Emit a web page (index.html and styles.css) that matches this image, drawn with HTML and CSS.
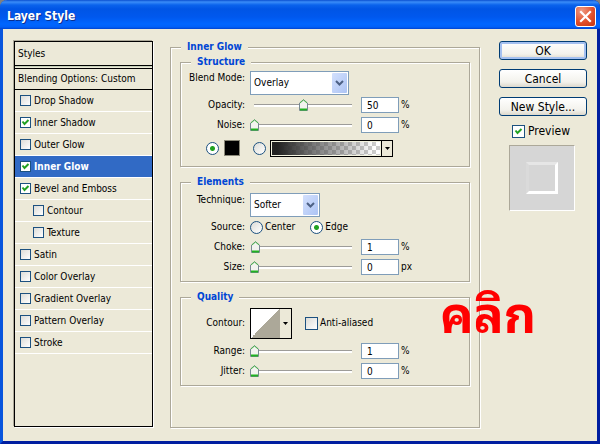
FILE: index.html
```html
<!DOCTYPE html>
<html lang="en">
<head>
<meta charset="utf-8">
<title>Layer Style</title>
<link rel="stylesheet" href="styles.css">
</head>
<body>
<div class="window">
  <header class="titlebar">
    <h1>Layer Style</h1>
    <button class="close" type="button" aria-label="Close">
      <svg viewBox="0 0 21 21" width="21" height="21"><path d="M6 6l9 9M15 6l-9 9" stroke="#fff" stroke-width="2.2" stroke-linecap="square"/></svg>
    </button>
  </header>
  <main class="content">
    <section class="styles">
      <div class="styles-head">Styles</div>
      <div class="blending">Blending Options: Custom</div>
      <label class="item"><input type="checkbox">Drop Shadow</label>
      <label class="item"><input type="checkbox" checked>Inner Shadow</label>
      <label class="item"><input type="checkbox">Outer Glow</label>
      <label class="item selected"><input type="checkbox" checked>Inner Glow</label>
      <label class="item"><input type="checkbox" checked>Bevel and Emboss</label>
      <label class="item sub"><input type="checkbox">Contour</label>
      <label class="item sub"><input type="checkbox">Texture</label>
      <label class="item"><input type="checkbox">Satin</label>
      <label class="item"><input type="checkbox">Color Overlay</label>
      <label class="item"><input type="checkbox">Gradient Overlay</label>
      <label class="item"><input type="checkbox">Pattern Overlay</label>
      <label class="item"><input type="checkbox">Stroke</label>
    </section>

    <fieldset class="panel">
      <legend>Inner Glow</legend>
      <fieldset class="group">
        <legend>Structure</legend>
        <div class="row tall">
          <label class="name" for="blend">Blend Mode:</label>
          <select id="blend" class="wide"><option>Overlay</option></select>
        </div>
        <div class="row">
          <label class="name" for="opacity">Opacity:</label>
          <input type="range" value="50" aria-label="Opacity slider">
          <input type="text" id="opacity" value="50"><span class="unit">%</span>
        </div>
        <div class="row">
          <label class="name" for="noise">Noise:</label>
          <input type="range" value="0" aria-label="Noise slider">
          <input type="text" id="noise" value="0"><span class="unit">%</span>
        </div>
        <div class="row fill">
          <input type="radio" name="fill" aria-label="Solid color" checked>
          <button class="swatch" type="button" aria-label="Glow color"></button>
          <input type="radio" name="fill" aria-label="Gradient">
          <button class="gradient" type="button" aria-label="Gradient picker"><span class="ramp"></span><span class="drop"><svg viewBox="0 0 5 3" width="5" height="3"><path d="M0 0h5L2.500 3z"/></svg></span></button>
        </div>
      </fieldset>

      <fieldset class="group elements">
        <legend>Elements</legend>
        <div class="row tall">
          <label class="name" for="technique">Technique:</label>
          <select id="technique"><option>Softer</option></select>
        </div>
        <div class="row">
          <span class="name">Source:</span>
          <label class="choice"><input type="radio" name="source">Center</label>
          <label class="choice"><input type="radio" name="source" checked>Edge</label>
        </div>
        <div class="row">
          <label class="name" for="choke">Choke:</label>
          <input type="range" value="1" aria-label="Choke slider">
          <input type="text" id="choke" value="1"><span class="unit">%</span>
        </div>
        <div class="row">
          <label class="name" for="size">Size:</label>
          <input type="range" value="0" aria-label="Size slider">
          <input type="text" id="size" value="0"><span class="unit">px</span>
        </div>
      </fieldset>

      <fieldset class="group quality">
        <legend>Quality</legend>
        <div class="row contour-row">
          <span class="name">Contour:</span>
          <button class="contour" type="button" aria-label="Contour picker"><span class="curve"></span><span class="drop"><svg viewBox="0 0 5 3" width="5" height="3"><path d="M0 0h5L2.500 3z"/></svg></span></button>
          <label class="choice"><input type="checkbox">Anti-aliased</label>
        </div>
        <div class="row">
          <label class="name" for="range">Range:</label>
          <input type="range" value="0" aria-label="Range slider">
          <input type="text" id="range" value="1"><span class="unit">%</span>
        </div>
        <div class="row">
          <label class="name" for="jitter">Jitter:</label>
          <input type="range" value="0" aria-label="Jitter slider">
          <input type="text" id="jitter" value="0"><span class="unit">%</span>
        </div>
      </fieldset>
    </fieldset>

    <aside class="actions">
      <button class="btn default" type="button">OK</button>
      <button class="btn" type="button">Cancel</button>
      <button class="btn" type="button">New Style...</button>
      <label class="preview"><input type="checkbox" checked>Preview</label>
      <div class="thumb"><div class="bevel"></div></div>
    </aside>
  </main>
  <div class="note" lang="th">คลิก</div>
</div>
</body>
</html>
```
FILE: styles.css
```css
* { box-sizing: border-box; }

body {
  margin: 0;
  background: #808080;
  color: #000;
  font: 10px/14px "DejaVu Sans Condensed", "DejaVu Sans", sans-serif;
}

button, input, select { font: inherit; color: inherit; margin: 0; padding: 0; }

.window {
  position: relative;
  display: flex;
  flex-direction: column;
  min-height: 100vh;
  background: #ece9d8;
  border: solid #0831d9;
  border-width: 0 3px 3px;
  border-color: #0831d9 #001ea0 #001ea0 #0855dd;
  border-radius: 7px 7px 0 0;
}

.titlebar {
  display: flex;
  align-items: center;
  justify-content: space-between;
  height: 29px;
  margin: 0 -3px;
  padding: 3px 4px 0 7px;
  border-radius: 7px 7px 0 0;
  background: linear-gradient(#0a4fd0 0, #3a8cf8 2px, #0a63ec 5px, #0055e5 9px, #0058ee 17px, #0066ff 24px, #0060f8 27px, #0043cf 29px);
}

.titlebar h1 {
  margin: 0;
  color: #fff;
  font: bold 12px/16px "DejaVu Sans Condensed", "DejaVu Sans", sans-serif;
  text-shadow: 1px 1px 0 #0a2f8f;
}

.close {
  width: 21px;
  height: 21px;
  border: 1px solid #fff;
  border-radius: 3px;
  background: radial-gradient(circle at 30% 20%, #ee9a82, #e2502c 55%, #c33410);
}
.close svg { display: block; margin: -1px; }

.content {
  flex: 1;
  display: flex;
  align-items: stretch;
  padding: 11px 10px 13px 11px;
}

/* list of styles */
.styles {
  flex: 0 1 139px;
  margin-top: 1px;
  margin-bottom: 1px;
  border: 1px solid #000;
  box-shadow: -1px -1px 0 #aca899, 1px 1px 0 #fff;
}
.styles-head, .blending { padding: 4px 3px; border-bottom: 1px solid #000; height: 23px; }
.styles-head { height: 24px; padding-top: 5px; box-shadow: 0 1px 0 #c5cfb8; }
.blending { margin-top: 2px; border-top: 1px solid #000; height: 22px; padding: 3px; }
.item {
  display: flex;
  align-items: center;
  gap: 3px;
  height: 22px;
  padding-left: 5px;
  border-bottom: 1px solid #fff;
}
.sub { padding-left: 18px; }
.selected { background: #316ac5; color: #fff; font-weight: bold; }

/* check boxes and radio buttons */
input[type="checkbox"] {
  appearance: none;
  flex: none;
  width: 11px;
  height: 11px;
  border: 1px solid #1c5180;
  background: linear-gradient(135deg, #dcdcd7, #fff);
}
input[type="checkbox"]:checked {
  background: #fff url("data:image/svg+xml,%3Csvg xmlns='http://www.w3.org/2000/svg' viewBox='0 0 9 9'%3E%3Cpath d='M1.500 3.500L3.500 6L7.500 2' fill='none' stroke='%2321a121' stroke-width='2'/%3E%3C/svg%3E") center / 9px 9px no-repeat;
}
input[type="radio"] {
  appearance: none;
  flex: none;
  width: 13px;
  height: 13px;
  border: 1px solid #1c5180;
  border-radius: 50%;
  background: linear-gradient(135deg, #dcdcd7, #fff);
}
input[type="radio"]:checked { background: radial-gradient(circle, #21a121 2px, #fff 3px); }

/* etched frames */
fieldset {
  min-width: 0;
  margin: 0;
  padding: 0;
  border: 1px solid #aca899;
  box-shadow: 1px 1px 0 #fff, inset 1px 1px 0 #fff;
}
legend {
  height: 14px;
  padding: 0 6px;
  color: #0046d5;
  background: #ece9d8;
  font-weight: bold;
}
.panel {
  flex: 0 1 310px;
  margin-left: 17px;
  padding: 1px 9px 0;
}
.panel > legend { margin-left: 1px; }
.group { padding: 2px 0 5px; margin-bottom: 8px; }
.group > legend { margin-left: 10px; }
.elements { padding: 4px 0; }
.quality { padding: 1px 0 4px; }

.row { display: flex; align-items: center; gap: 5px; height: 20px; }
.tall { height: 24px; }
.name { flex: none; width: 64px; text-align: right; }
.tall .name { align-self: flex-start; }
.unit { margin-left: -3px; }
.choice { display: flex; align-items: center; gap: 2px; margin-right: 10px; }

input[type="text"] {
  width: 38px;
  height: 16px;
  padding-left: 5px;
  border: 1px solid #7f9db9;
  background: #fff;
}

select {
  appearance: none;
  width: 70px;
  height: 24px;
  padding-left: 3px;
  border: 1px solid #7f9db9;
  border-radius: 0;
  background: #fff url("data:image/svg+xml,%3Csvg xmlns='http://www.w3.org/2000/svg' viewBox='0 0 15 20'%3E%3Cdefs%3E%3ClinearGradient id='g' x2='1' y2='1'%3E%3Cstop stop-color='%23d3e0fd'/%3E%3Cstop offset='1' stop-color='%23adc4f4'/%3E%3C/linearGradient%3E%3C/defs%3E%3Crect width='15' height='20' rx='1' fill='url(%23g)'/%3E%3Cpath d='M4 8l3.500 3.500L11 8' fill='none' stroke='%234d6185' stroke-width='2'/%3E%3C/svg%3E") right 1px center / 15px 20px no-repeat;
}
select.wide { width: 99px; }

input[type="range"] {
  appearance: none;
  width: 106px;
  height: 14px;
  background: linear-gradient(#9d9c99 0 1px, #fff 1px 3px) 4px 6px / 98px 3px no-repeat;
}
input[type="range"]::-webkit-slider-thumb {
  appearance: none;
  width: 9px;
  height: 12px;
  background: url("data:image/svg+xml,%3Csvg xmlns='http://www.w3.org/2000/svg' viewBox='0 0 9 12'%3E%3Cpath d='M.5 11.500V4L4.500 .7L8.500 4V11.500z' fill='%23f3f3ef' stroke='%23778892'/%3E%3Cpath d='M1 4L4.500 1L8 4' fill='none' stroke='%2349b949'/%3E%3Cpath d='M1 10.500h7' stroke='%2321b121' stroke-width='2'/%3E%3C/svg%3E") no-repeat;
}

.fill { height: 26px; padding-left: 25px; }
.swatch {
  width: 16px;
  height: 16px;
  margin-right: 8px;
  border: 1px solid #8a8878;
  background: #000;
}
.gradient {
  display: flex;
  width: 123px;
  height: 17px;
  margin-left: -1px;
  border: 1px solid #000;
  background: #ece9d8;
}
.ramp {
  flex: 1;
  border: 1px solid #f4f4e0;
  background:
    linear-gradient(90deg, #222 5%, rgba(80, 80, 80, .75) 40%, rgba(128, 128, 128, 0) 95%),
    repeating-conic-gradient(#ccc 0 25%, #fff 0 50%) 0 0 / 8px 8px;
}
.drop {
  display: flex;
  align-items: center;
  justify-content: center;
  width: 11px;
  border-left: 1px solid #000;
}

.contour-row { height: 36px; }
.contour {
  display: flex;
  width: 42px;
  height: 31px;
  border: 1px solid #000;
  background: #ece9d8;
}
.curve { flex: 1; background: linear-gradient(135deg, #fff 50%, #aca899 50%); }
.contour .drop { border: 0; }
.contour-row .choice { margin-left: 8px; }
.choice input[type="checkbox"], .preview input { width: 13px; height: 13px; }
.gradient > *, .contour > * { align-self: stretch; }

/* buttons */
.actions {
  display: flex;
  flex-direction: column;
  width: 88px;
  margin: 1px 0 0 auto;
  font-size: 12px;
}
.btn {
  height: 19px;
  margin-bottom: 9px;
  border: 1px solid #003c74;
  border-radius: 3px;
  background: linear-gradient(#fff, #f3f2ec 70%, #dcd8cc);
}
.default { box-shadow: inset 0 0 0 2px #a4c0f0; }
.preview { display: flex; align-items: center; gap: 3px; margin: -2px 0 0 13px; height: 16px; }
.thumb {
  display: flex;
  align-items: center;
  justify-content: center;
  width: 66px;
  height: 66px;
  margin: 6px 0 0 10px;
  background: #d6d6d6;
  border: 1px solid;
  border-color: #aca899 #fff #fff #aca899;
}
.bevel {
  width: 32px;
  height: 32px;
  border: 3px solid;
  border-color: #e6e6e6 #fff #fff #dadada;
}

.note {
  position: absolute;
  left: 437px;
  top: 279px;
  color: #f00;
  font: bold 50px/64px "Noto Sans Thai Looped", "Loma", "Waree", "Noto Sans Thai", sans-serif;
}
```
